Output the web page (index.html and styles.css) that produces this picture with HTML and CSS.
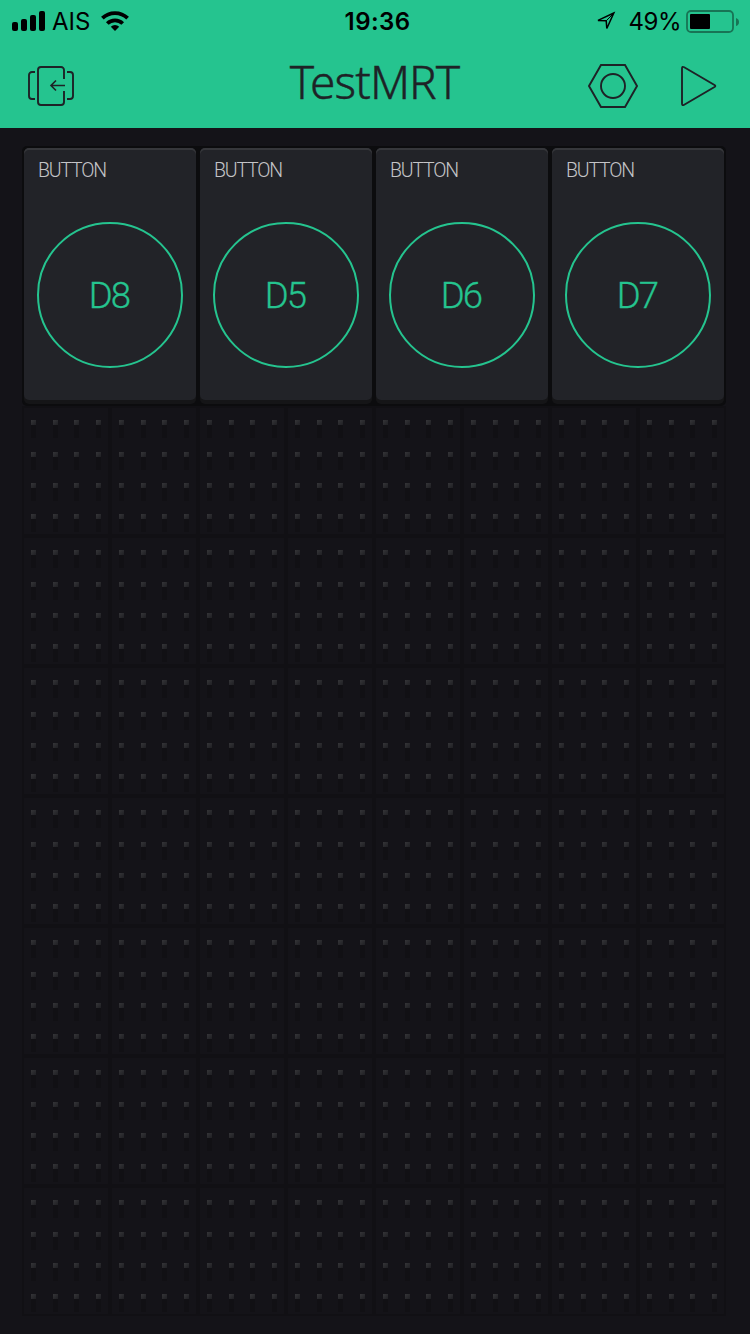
FILE: index.html
```html
<!DOCTYPE html>
<html lang="en">
<head>
<meta charset="utf-8">
<title>TestMRT</title>
<link rel="stylesheet" href="styles.css">
</head>
<body>
<header class="header">
  <div class="status">
    <div class="status-left">
      <svg class="signal" width="34" height="20" viewBox="0 0 34 20"><rect y="11" width="6" height="9" rx="2"/><rect x="9" y="8" width="6" height="12" rx="2"/><rect x="18" y="4" width="6" height="16" rx="2"/><rect x="27" width="6" height="20" rx="2"/></svg>
      <span class="carrier">AIS</span>
      <svg class="wifi" width="28" height="20" viewBox="0 0 28 20"><path d="M14 20l-4.2-4.3a6.2 6.2 0 0 1 8.4 0z"/><path d="M6.3 12.5a11 11 0 0 1 15.4 0M1.4 7.2a18 18 0 0 1 25.2 0" fill="none" stroke="#000" stroke-width="3.8"/></svg>
    </div>
    <span class="clock">19:36</span>
    <div class="status-right">
      <svg class="location" width="20" height="20" viewBox="0 0 20 20"><path d="M17.800 2L2 9.400l8.200.4.600 7.700z" fill="none" stroke="#000" stroke-width="1.500"/><path d="M17 3L10.500 9.500" stroke="#000" stroke-width="1"/></svg>
      <span class="percent">49%</span>
      <svg class="battery" width="54" height="24" viewBox="0 0 54 24"><rect x="1" y="1" width="46" height="21" rx="4" fill="none" stroke="#187455" stroke-width="1.800"/><rect x="4" y="4" width="20" height="15" rx="1"/><path d="M50 8q3 1 3 4t-3 4z" fill="#187455"/></svg>
    </div>
  </div>
  <nav class="toolbar">
    <svg class="exit" width="48" height="42" viewBox="0 0 48 42"><path d="M36 14V5a3 3 0 0 0-3-3H13a3 3 0 0 0-3 3v32a3 3 0 0 0 3 3h20a3 3 0 0 0 3-3V26M7 7H4a3 3 0 0 0-3 3v21a3 3 0 0 0 3 3h3M39 7h3a3 3 0 0 1 3 3v21a3 3 0 0 1-3 3h-3"/><path class="thin" d="M37 20.5H23M28 15.5l-5 5 5 5"/></svg>
    <h1 class="title">TestMRT</h1>
    <div class="actions">
      <svg width="50" height="46" viewBox="0 0 50 46"><path d="M13 2h24l12 21-12 21H13L1 23z"/><circle cx="25" cy="23" r="12"/></svg>
      <svg width="38" height="42" viewBox="0 0 38 42"><path d="M3 3.5v35q0 2.500 2.200 1.200L35.500 22q1.600-1 0-2L5.200 2.300Q3 1 3 3.5z"/></svg>
    </div>
  </nav>
</header>
<main class="board">
  <section class="widgets">
    <article class="widget"><h2 class="label">BUTTON</h2><button class="pin">D8</button></article>
    <article class="widget"><h2 class="label">BUTTON</h2><button class="pin">D5</button></article>
    <article class="widget"><h2 class="label">BUTTON</h2><button class="pin">D6</button></article>
    <article class="widget"><h2 class="label">BUTTON</h2><button class="pin">D7</button></article>
  </section>
  <svg class="grid" width="704" height="910">
    <defs>
      <linearGradient id="shine" x1="0" y1="0" x2="1" y2="1"><stop offset="0" stop-color="#353538"/><stop offset="1" stop-color="#1f1f23"/></linearGradient>
      <g id="hole"><rect y="5" width="5" height="13" fill="#111014"/><rect width="5" height="5" fill="url(#shine)"/></g>
      <g id="row"><use href="#hole" x="9"/><use href="#hole" x="31"/><use href="#hole" x="52"/><use href="#hole" x="74"/></g>
      <pattern id="cell" width="88" height="130" patternUnits="userSpaceOnUse">
        <rect width="88" height="130" fill="#111014"/>
        <rect x="2" y="2" width="84" height="126" rx="1" fill="#141318"/>
        <use href="#row" y="14"/><use href="#row" y="46"/><use href="#row" y="77"/><use href="#row" y="108"/>
      </pattern>
    </defs>
    <rect width="704" height="910" fill="url(#cell)"/>
  </svg>
</main>
</body>
</html>
```
FILE: styles.css
```css
* { box-sizing: border-box; }
body {
  margin: 0;
  width: 750px;
  height: 1334px;
  overflow: hidden;
  background: #141318;
  font-family: Inter, "Liberation Sans", sans-serif;
}
svg { display: block; flex: none; }
.header { height: 128px; background: #25c48f; }
.status {
  display: grid;
  grid-template-columns: 1fr auto 1fr;
  height: 40px;
  padding: 0 10px 0 12px;
  align-items: center;
  font-size: 24px;
  line-height: 40px;
  color: #000;
}
.status-left, .status-right { display: flex; align-items: center; height: 40px; }
.status-right { justify-content: flex-end; }
.carrier, .percent { padding-top: 2px; }
.carrier { margin-left: 6px; letter-spacing: 0; }
.wifi { margin-left: 11px; }
.signal, .wifi { margin-top: -1px; }
.battery { margin-top: 1px; }
.clock { font-weight: 600; letter-spacing: .4px; padding: 2px 0 0 3px; }
.percent { margin: 0 5px 0 13px; letter-spacing: -.5px; }
.toolbar {
  display: grid;
  grid-template-columns: 1fr auto 1fr;
  height: 88px;
  padding: 0 33px 0 28px;
}
.toolbar svg { fill: none; stroke: #1e2226; stroke-width: 1.9; }
.toolbar .thin { stroke-width: 1.6; }
.exit { margin-top: 25px; }
.title {
  margin: 9px 0 0 4px;
  font: 300 46px/64px "Noto Sans", "Open Sans", sans-serif;
  letter-spacing: -.9px;
  -webkit-text-stroke: .4px #1e2226;
  color: #1e2226;
}
.actions { display: flex; justify-content: flex-end; gap: 41px; padding-top: 23px; }
.actions svg:last-child { margin-top: 2px; }
.board { padding: 18px 22px 0; }
.widgets {
  display: grid;
  grid-template-columns: repeat(4, 172px);
  gap: 4px;
  width: 704px;
  height: 260px;
  padding: 2px;
  background: #0c0c0e;
  border-radius: 5px;
}
.widget {
  display: flex;
  flex-direction: column;
  height: 252px;
  padding: 0 13px;
  background: #222328;
  border-radius: 5px;
  box-shadow: inset 0 2px #36373b, 0 4px #151517;
}
.label {
  margin: 11px 0 0 1px;
  font: 300 19.5px/24px Roboto, sans-serif;
  letter-spacing: -1.2px;
  color: #c4c4c7;
}
.pin {
  width: 146px;
  height: 146px;
  margin-top: 39px;
  padding: 2px 2px 0 0;
  border: 2px solid #25c48f;
  border-radius: 50%;
  background: none;
  color: #25c48f;
  font: 300 36.5px/1 Roboto, sans-serif;
  letter-spacing: -1.8px;
  -webkit-text-stroke: .3px #25c48f;
}
```
